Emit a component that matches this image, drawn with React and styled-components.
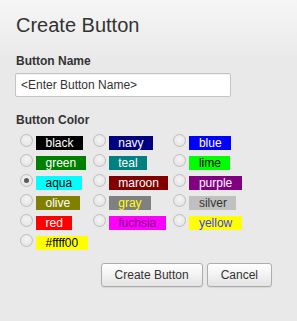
import React from "react";
import styled, { createGlobalStyle } from "styled-components";

const GlobalStyle = createGlobalStyle`
  html, body {
    margin: 0;
    padding: 0;
    background: #e9e9e9;
  }
  body {
    font-family: "Liberation Sans", Arial, sans-serif;
    color: #333;
  }
`;

const colors = [
  { name: "black", bg: "#000000", fg: "#ffffff" },
  { name: "navy", bg: "#000080", fg: "#ffffff" },
  { name: "blue", bg: "#0000ff", fg: "#ffffff" },
  { name: "green", bg: "#008000", fg: "#ffffff" },
  { name: "teal", bg: "#008080", fg: "#ffffff" },
  { name: "lime", bg: "#00ff00", fg: "#000000" },
  { name: "aqua", bg: "#00ffff", fg: "#000000", checked: true },
  { name: "maroon", bg: "#800000", fg: "#ffffff" },
  { name: "purple", bg: "#800080", fg: "#ffffff" },
  { name: "olive", bg: "#808000", fg: "#ffffff" },
  { name: "gray", bg: "#808080", fg: "#ffff00" },
  { name: "silver", bg: "#c0c0c0", fg: "#333333" },
  { name: "red", bg: "#ff0000", fg: "#ffffff" },
  { name: "fuchsia", bg: "#ff00ff", fg: "#800080" },
  { name: "yellow", bg: "#ffff00", fg: "#4040ff" },
  { name: "#ffff00", bg: "#ffff00", fg: "#000000" },
];

const Dialog = styled.div`
  width: 297px;
  height: 321px;
  box-sizing: border-box;
  padding: 14px 25px 0 16px;
  background: linear-gradient(to bottom, #f6f6f6 0px, #e9e9e9 60px, #e9e9e9 100%);
`;

const Title = styled.h1`
  margin: 0;
  font-size: 20px;
  line-height: 23px;
  font-weight: normal;
  color: #333;
`;

const FieldLabel = styled.div`
  font-size: 12px;
  line-height: 14px;
  font-weight: bold;
  color: #333;
  margin-top: ${(p) => p.$top}px;
`;

const TextInput = styled.input`
  display: block;
  box-sizing: border-box;
  width: 216px;
  height: 24px;
  margin: 5px 0 0 -1px;
  padding: 0 5px;
  border: 1px solid #c4c4c4;
  border-radius: 2px;
  background: #fff;
  box-shadow: inset 0 1px 1px rgba(0, 0, 0, 0.06);
  font-family: "Liberation Sans", Arial, sans-serif;
  font-size: 12px;
  color: #333;
  outline: none;
`;

const ColorGrid = styled.div`
  display: grid;
  grid-template-columns: repeat(3, max-content);
  grid-auto-rows: 20px;
  column-gap: 5px;
  margin-top: 6px;
  padding-left: 4px;
`;

const Option = styled.label`
  display: flex;
  align-items: flex-start;
  gap: 3px;
`;

const Radio = styled.span`
  position: relative;
  box-sizing: border-box;
  width: 13px;
  height: 13px;
  margin-top: 1px;
  border-radius: 50%;
  border: 1px solid #bdbdbd;
  background: radial-gradient(circle at 50% 40%, #f4f4f4 0%, #e6e6e6 70%, #dadada 100%);

  &::after {
    content: "";
    display: ${(p) => (p.$checked ? "block" : "none")};
    position: absolute;
    left: 3px;
    top: 3px;
    width: 5px;
    height: 5px;
    border-radius: 50%;
    background: #5a5a5a;
  }
`;

const Swatch = styled.span`
  display: inline-block;
  height: 14px;
  margin-top: 3px;
  padding: 0 9.5px;
  font-size: 12px;
  line-height: 14px;
  background: ${(p) => p.$bg};
  color: ${(p) => p.$fg};
`;

const Footer = styled.div`
  display: flex;
  justify-content: flex-end;
  gap: 4px;
  margin-top: 10px;
`;

const Button = styled.button`
  box-sizing: border-box;
  height: 24px;
  padding: 0 13px;
  border: 1px solid #adadad;
  border-radius: 3px;
  background: linear-gradient(to bottom, #ffffff 0%, #f2f2f2 50%, #e3e3e3 100%);
  box-shadow: 0 1px 1px rgba(0, 0, 0, 0.08);
  font-family: "Liberation Sans", Arial, sans-serif;
  font-size: 12px;
  color: #333;
  cursor: pointer;
`;

export default function App() {
  return (
    <>
      <GlobalStyle />
      <Dialog>
        <Title>Create Button</Title>
        <FieldLabel $top={17}>Button Name</FieldLabel>
        <TextInput defaultValue="<Enter Button Name>" />
        <FieldLabel $top={16}>Button Color</FieldLabel>
        <ColorGrid>
          {colors.map((c) => (
            <Option key={c.name}>
              <Radio $checked={c.checked} />
              <Swatch $bg={c.bg} $fg={c.fg}>
                {c.name}
              </Swatch>
            </Option>
          ))}
        </ColorGrid>
        <Footer>
          <Button>Create Button</Button>
          <Button>Cancel</Button>
        </Footer>
      </Dialog>
    </>
  );
}
